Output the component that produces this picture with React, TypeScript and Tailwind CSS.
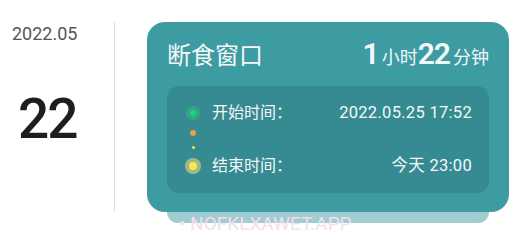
const font = "font-['Roboto','Noto_Sans_CJK_SC',sans-serif]";

function Dot({ core, halo, size, haloSize }: { core: string; halo?: string; size: string; haloSize?: string }) {
  return (
    <div className="w-4 flex justify-center items-center">
      {halo ? (
        <div className={`${haloSize} ${halo} rounded-full flex items-center justify-center`}>
          <div className={`${size} ${core} rounded-full`} />
        </div>
      ) : (
        <div className={`${size} ${core} rounded-full`} />
      )}
    </div>
  );
}

export default function App() {
  return (
    <div className={`${font} w-[530px] h-[243px] bg-white flex pt-[22px] overflow-hidden`}>
      {/* date column */}
      <div className="w-[115px] h-[190px] border-r border-[#dcdcdc] flex flex-col">
        <div className="pl-[12px] pt-[3px] text-[18px] leading-none text-[#555]">2022.05</div>
        <div className="pl-[18px] mt-[49px] text-[55px] font-medium tracking-[-2px] leading-none text-[#1e1e1e]">22</div>
      </div>

      <div className="ml-[32px] flex flex-col">
        <div className="w-[362px] h-[190px] rounded-[18px] bg-[#3d9ba2] px-5 pt-[17px] text-[#f4f8f8]">
          <div className="flex items-baseline justify-between h-[28px]">
            <div className="text-[24px] leading-none">断食窗口</div>
            <div className="flex items-baseline leading-none">
              <span className="text-[30px] font-semibold tracking-[-1px]">1</span>
              <span className="text-[18px] ml-[3px]">小时</span>
              <span className="text-[30px] font-semibold tracking-[-1px]">22</span>
              <span className="text-[18px] ml-[3px]">分钟</span>
            </div>
          </div>

          <div className="mt-[19px] h-[107px] rounded-[12px] bg-[#368a91] pl-[18px] pr-[17px] flex flex-col">
            <div className="mt-[17px] h-[20px] flex items-center">
              <Dot core="bg-[#1ed27a]" halo="bg-[#2fb483]/70" size="w-[6px] h-[6px]" haloSize="w-[14px] h-[14px]" />
              <div className="ml-[11px] flex-1 flex justify-between text-[16px] leading-none">
                <span>开始时间：</span>
                <span className="text-[16.5px] tracking-[0.3px]">2022.05.25 17:52</span>
              </div>
            </div>
            <div className="mt-[7px] flex">
              <Dot core="bg-[#f29a3f]" size="w-[6px] h-[6px]" />
            </div>
            <div className="mt-[10px] flex">
              <Dot core="bg-[#f6e44c]" size="w-[3px] h-[3px]" />
            </div>
            <div className="mt-[7px] h-[20px] flex items-center">
              <Dot core="bg-[#fbe84a]" halo="bg-[#9fb98a]" size="w-[8px] h-[8px]" haloSize="w-[16px] h-[16px]" />
              <div className="ml-[11px] flex-1 flex justify-between text-[16px] leading-none">
                <span>结束时间：</span>
                <span className="text-[16.5px] tracking-[0.3px]">今天 23:00</span>
              </div>
            </div>
          </div>
        </div>
        <div className="mx-5 h-[11px] rounded-b-[14px] bg-[#9fcdd1] pl-[12px] pt-[2px] text-[19px] leading-none text-[#f3def0] whitespace-nowrap">
          • NOFKLXAWET.APP
        </div>
      </div>
    </div>
  );
}
